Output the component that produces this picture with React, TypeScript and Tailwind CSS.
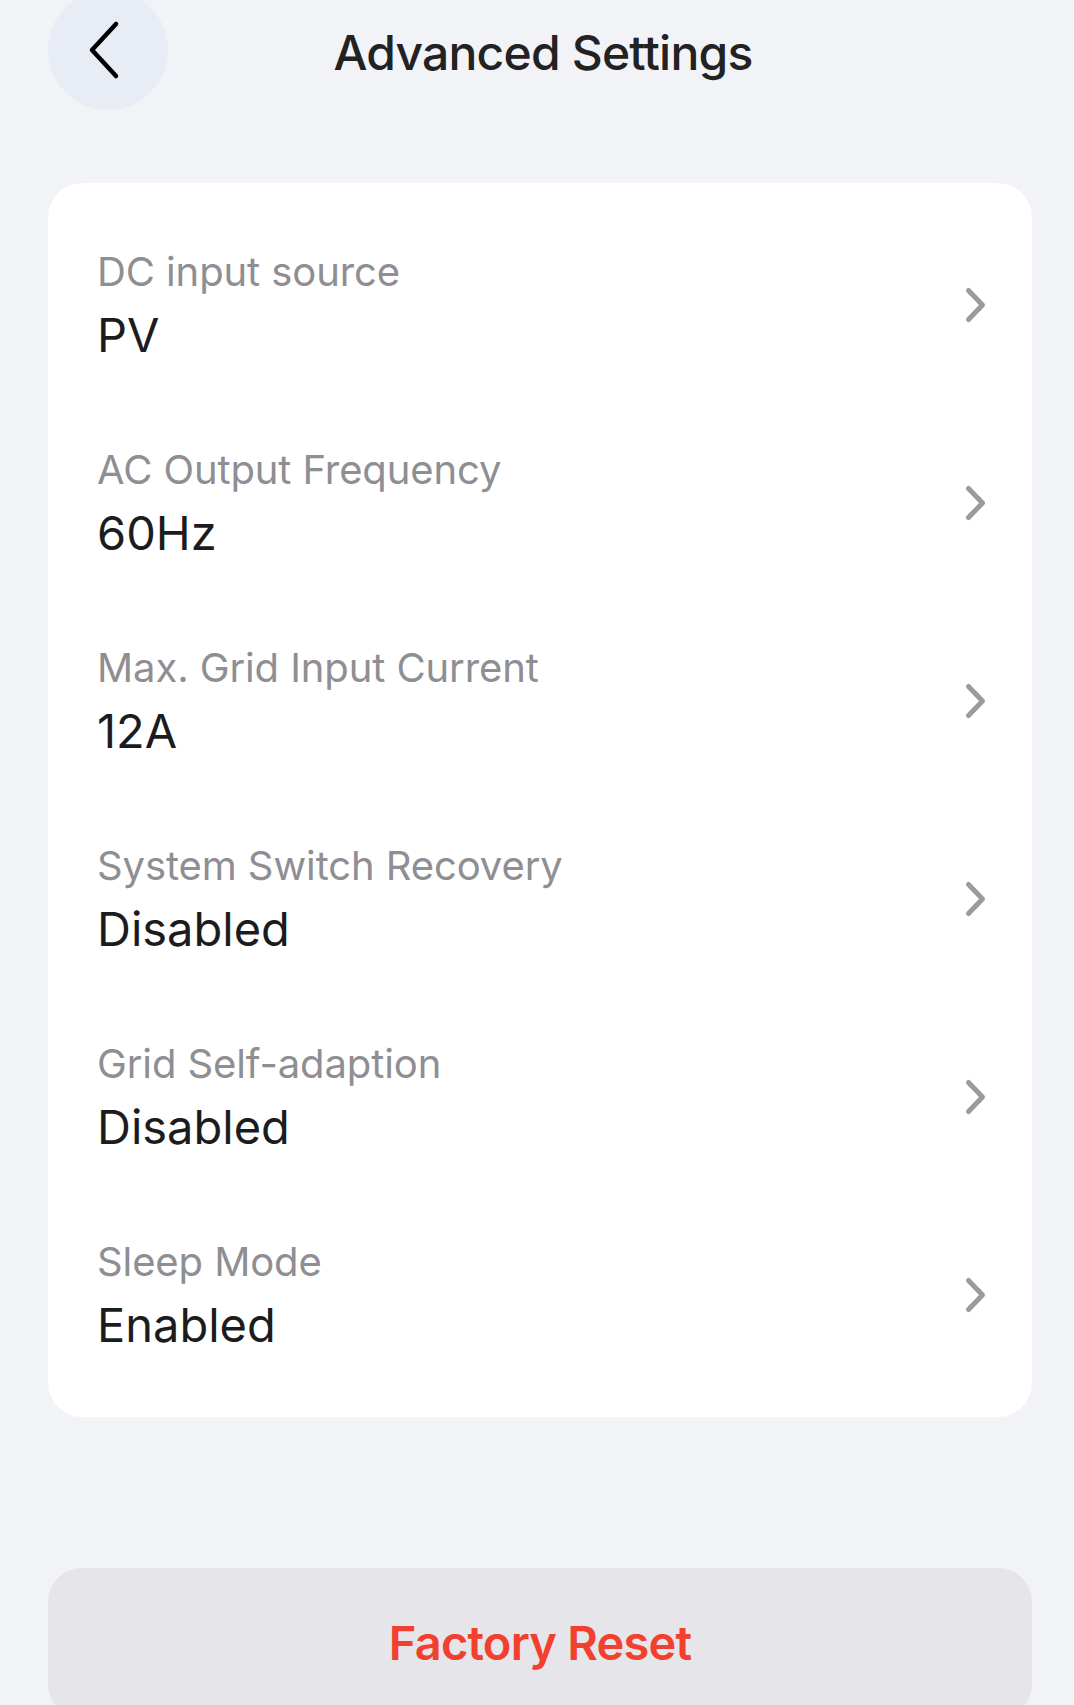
const rows = [
  { label: "DC input source", value: "PV" },
  { label: "AC Output Frequency", value: "60Hz" },
  { label: "Max. Grid Input Current", value: "12A" },
  { label: "System Switch Recovery", value: "Disabled" },
  { label: "Grid Self-adaption", value: "Disabled" },
  { label: "Sleep Mode", value: "Enabled" },
];

function Chevron() {
  return (
    <svg width="24" height="38" viewBox="0 0 24 38" fill="none" className="shrink-0">
      <path d="M4.5 4.5 L18.5 19 L4.5 33.5" stroke="#9b9b9b" strokeWidth="5" strokeLinecap="round" strokeLinejoin="round" />
    </svg>
  );
}

function BackArrow() {
  return (
    <svg width="40" height="62" viewBox="0 0 40 62" fill="none" className="-ml-[8px]">
      <path d="M32 5 L8 31 L32 57" stroke="#000" strokeWidth="4.5" strokeLinecap="round" strokeLinejoin="round" />
    </svg>
  );
}

export default function App() {
  return (
    <div className="h-[1705px] overflow-hidden bg-[#f2f3f7] pl-[48px] pr-[42px] font-['Inter',sans-serif]">
      {/* Header */}
      <div className="flex items-start h-[183px]">
        <button className="-mt-[10px] w-[120px] h-[120px] rounded-full bg-[#e8ecf5] flex items-center justify-center shrink-0">
          <BackArrow />
        </button>
        <h1 className="flex-1 mr-[114px] mt-[21px] text-center text-[48px] leading-[64px] font-medium tracking-[-0.8px] text-[#222222]">
          Advanced Settings
        </h1>
      </div>

      {/* Settings card */}
      <div className="bg-white rounded-[34px] py-[23px]">
        {rows.map((r) => (
          <div key={r.label} className="h-[198px] flex items-center justify-between pl-[49px] pr-[44px]">
            <div className="flex flex-col">
              <span className="text-[40px] leading-[52px] text-[#8e8e93] tracking-[-0.1px]">{r.label}</span>
              <span className="mt-[7px] text-[47px] leading-[60px] text-[#1c1c1e]">{r.value}</span>
            </div>
            <Chevron />
          </div>
        ))}
      </div>

      {/* Factory reset */}
      <button className="mt-[151px] w-full h-[150px] rounded-[34px] bg-[#e5e5ea] flex items-center justify-center">
        <span className="text-[47px] font-semibold text-[#f2402f] tracking-[-0.8px]">Factory Reset</span>
      </button>
    </div>
  );
}
